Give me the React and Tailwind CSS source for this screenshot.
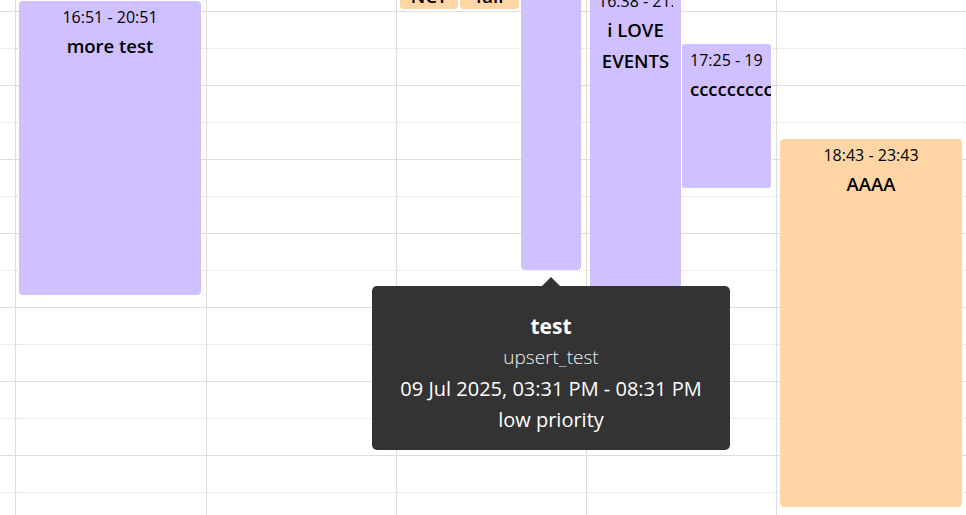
// App.jsx
import React from "react";

const slots = Array.from({ length: 16 }, (_, i) => i);

const events = [
    [
        { id: 1, left: 3, top: 1, width: 182, height: 294, color: "bg-[#cfc0ff]", time: "16:51 - 20:51", title: "more test" },
    ],
    [],
    [
        { id: 2, left: 3, top: -60, width: 58, height: 69, color: "bg-[#fed6a6]", time: "12:40 - 13:10", title: "NCT", clipTop: true },
        { id: 3, left: 63, top: -60, width: 59, height: 69, color: "bg-[#fed6a6]", time: "12:40 - 13:10", title: "fall", clipTop: true },
        { id: 4, left: 124, top: -120, width: 60, height: 390, color: "bg-[#cfc0ff]", time: "15:31 - 20:31", title: "test" },
    ],
    [
        { id: 5, left: 3, top: -15, width: 91, height: 390, color: "bg-[#cfc0ff]", time: "16:38 - 21:38", title: "i LOVE EVENTS" },
        { id: 6, left: 94, top: 43, width: 91, height: 146, color: "bg-[#cfc0ff]", time: "17:25 - 19:25", title: "cccccccccccc", bordered: true },
    ],
    [
        { id: 7, left: 3, top: 139, width: 182, height: 368, color: "bg-[#fed6a6]", time: "18:43 - 23:43", title: "AAAA" },
    ],
];

function Slots() {
    return (
        <div className="-mt-[63px] flex flex-col">
            {slots.map((i) => (
                <div
                    key={i}
                    className={`h-[37px] border-t border-[#dddddd] ${i % 2 === 0 ? "border-solid" : "border-dotted"}`}
                />
            ))}
        </div>
    );
}

function EventCard({ e }) {
    return (
        <div
            className={`absolute rounded-[4px] overflow-hidden px-2 text-center text-black ${e.color} ${e.bordered ? "border border-white" : ""} ${e.clipTop ? "flex flex-col justify-end pb-[3px]" : ""}`}
            style={{ left: e.left, top: e.top, width: e.width, height: e.height }}
        >
            <div className="whitespace-nowrap overflow-hidden text-[16px] leading-[22px] pt-[5px]">{e.time}</div>
            <div className={`text-[18.5px] font-semibold ${e.clipTop ? "leading-[20px]" : "leading-[31px] pt-[2px]"}`}>{e.title}</div>
        </div>
    );
}

export default function App() {
    const widths = ["w-[191px]", "w-[190px]", "w-[190px]", "w-[190px]", "w-[190px]"];
    return (
        <div className="relative w-[966px] h-[515px] overflow-hidden bg-white" style={{ fontFamily: '"Open Sans", "Noto Sans", sans-serif' }}>
            <div className="flex h-full">
                {/* gutter */}
                <div className="w-[16px] shrink-0 border-r border-[#dddddd] overflow-hidden">
                    <Slots />
                </div>
                {widths.map((w, ci) => (
                    <div key={ci} className={`relative shrink-0 ${w} border-r border-[#dddddd]`}>
                        <Slots />
                        {events[ci].map((e) => (
                            <EventCard key={e.id} e={e} />
                        ))}
                    </div>
                ))}
            </div>

            {/* tooltip */}
            <div className="absolute left-[372px] top-[286px] w-[358px] rounded-[5px] bg-[#333333] pt-[24px] pb-[15px] text-center text-white">
                <div className="absolute -top-[9px] left-[170px] w-0 h-0 border-x-[9px] border-x-transparent border-b-[9px] border-b-[#333333]" />
                <div className="text-[21px] font-bold leading-[32px]">test</div>
                <div className="text-[19px] font-light leading-[31px] text-[#f2f2f2]">upsert_test</div>
                <div className="text-[20px] leading-[31px]">09 Jul 2025, 03:31 PM - 08:31 PM</div>
                <div className="text-[20px] leading-[31px]">low priority</div>
            </div>
        </div>
    );
}
